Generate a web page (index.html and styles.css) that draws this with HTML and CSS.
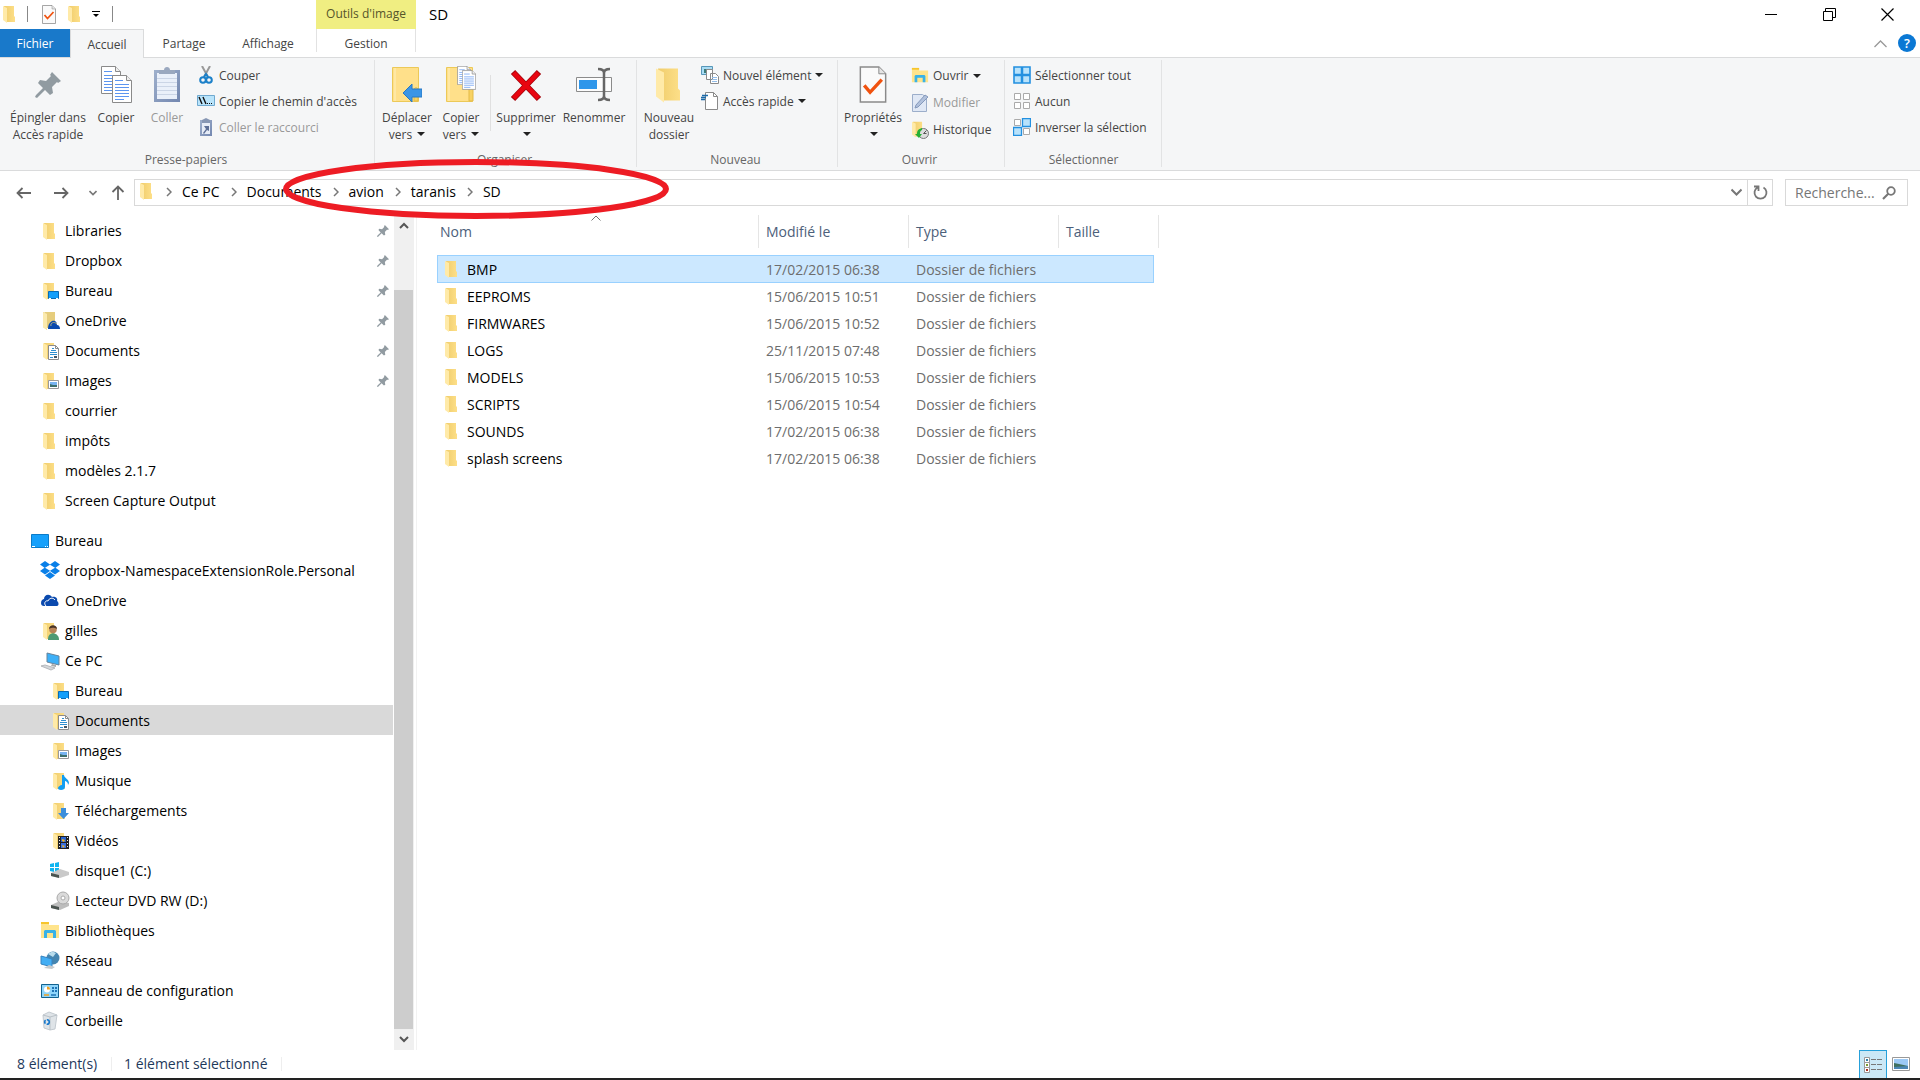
FILE: index.html
```html
<!DOCTYPE html>
<html lang="fr">
<head>
<meta charset="utf-8">
<title>SD</title>
<link rel="stylesheet" href="styles.css">
</head>
<body>
<svg class="defs" aria-hidden="true">
  <linearGradient id="gold"><stop offset="0" stop-color="#f0cd6c"/><stop offset="1" stop-color="#fddf88"/></linearGradient>
  <linearGradient id="clip" x1="0" y1="0" x2="1" y2="1"><stop offset="0" stop-color="#9fb0cc"/><stop offset="1" stop-color="#7387b0"/></linearGradient>
  <symbol id="folder" viewBox="0 0 12 17"><path d="M1 0h10v10l1 1v5H3z" fill="url(#gold)"/><path d="M0 0l4 2v15l-4-3z" fill="#ffeaa8"/></symbol>
  <symbol id="pin" viewBox="0 0 26 26"><path d="M17 0l9 9-3 2-1-1-5 5 1 6-3 2-5-5-8 8-2-1 1-2 7-7-5-5 2-3 6 1 5-5-1-1z" fill="#919ba1"/></symbol>
  <symbol id="page" viewBox="0 0 20 28"><path d="M.5 .5h14l5 5v22H.5z" fill="#fff" stroke="#8a8a8a"/><path d="M14.500 .5v5h5" fill="#eee" stroke="#8a8a8a"/><path d="M3 9.500h14M3 12.500h14M3 15.500h14M3 18.500h14M3 21.500h14M3 24.500h9M3 5.500h8" stroke="#5c95f0"/></symbol>
  <symbol id="check" viewBox="0 0 28 38"><path d="M1 1h19l7 7v29H1z" fill="#fafafa" stroke="#8a8a8a" stroke-width="1.500"/><path d="M20 1v7h7" fill="#e4e4e4" stroke="#8a8a8a"/><path d="M5 20l6 7 12-13" fill="none" stroke="#f0520f" stroke-width="3.500"/></symbol>
  <symbol id="chev" viewBox="0 0 6 10"><path d="M1 1l4 4-4 4" fill="none" stroke="#777" stroke-width="1.500"/></symbol>
  <symbol id="i-folder" viewBox="0 0 20 20"><use href="#folder" x="3" y="2" width="12" height="17"/></symbol>
  <symbol id="i-desk" viewBox="0 0 20 20"><use href="#folder" x="3" y="2" width="12" height="17"/><path d="M8.500 10.500h10v7h-10z" fill="#15a0fb" stroke="#0a6cb5"/><path d="M9 17.500h2m5 0h2" stroke="#fff"/></symbol>
  <symbol id="i-odf" viewBox="0 0 20 20"><path d="M3 1l4 1v17l-4-3zM5 1h10v16H7z" fill="#e6cd7d"/><path d="M3 1l4 2v16l-4-3z" fill="#fbeaae"/><path d="M8 18c0-4 1-6 4-8 4-1 5 2 5 4 2 0 3 2 3 4z" fill="#0b4aae"/><path d="M11 15c-1-3 3-5 6-2" fill="none" stroke="#d5c27a" stroke-width=".8"/></symbol>
  <symbol id="i-doc" viewBox="0 0 20 20"><use href="#folder" x="3" y="2" width="12" height="17"/><path d="M8.500 4.500h7l3 3v11h-10z" fill="#fff" stroke="#8b8b8b"/><path d="M15.500 4.500v3h3" fill="none" stroke="#8b8b8b"/><path d="M10 11.500h7M10 13.500h7M12 7.500h2M11 9.500h5M10 16.500h3" stroke="#2f8fd0"/><path d="M14 16h3" stroke="#456" stroke-width="2"/></symbol>
  <symbol id="i-img" viewBox="0 0 20 20"><use href="#folder" x="3" y="2" width="12" height="17"/><path d="M8.500 9.500h10v8h-10z" fill="#fff" stroke="#9a9a9a"/><path d="M10 11h7v3h-7z" fill="#78b4f2"/><path d="M10 13l3 1 4 0v2h-7z" fill="#3d6f6d"/></symbol>
  <symbol id="i-music" viewBox="0 0 20 20"><use href="#folder" x="3" y="2" width="12" height="17"/><path d="M12 4h2c0 3 5 4 5 8l-1 2c0-3-2-4-3-4v6c0 2-2 3-4 3s-3-1-3-2 2-3 4-3z" fill="#109df2"/></symbol>
  <symbol id="i-dl" viewBox="0 0 20 20"><use href="#folder" x="3" y="2" width="12" height="17"/><path d="M11 7h5v5h3l-5.500 6L8 12h3z" fill="#3c8fdc"/></symbol>
  <symbol id="i-vid" viewBox="0 0 20 20"><use href="#folder" x="3" y="2" width="12" height="17"/><path d="M8 5h11v13H8z" fill="#222"/><path d="M11 6h5v5h-5z" fill="#2b65d0"/><path d="M11 12h5v5h-5z" fill="#3a70e0"/><path d="M12 8l3 1-1 2-2-1zM12 14l3 1-2 2z" fill="#f0b428"/><path d="M9.500 6v12M17.500 6v12" stroke="#eee" stroke-dasharray="1 2"/></symbol>
  <symbol id="i-user" viewBox="0 0 20 20"><use href="#folder" x="3" y="2" width="12" height="17"/><path d="M8 19c0-4 1-6 5-7 4 1 6 3 6 7z" fill="#4e9a74"/><circle cx="13" cy="8.500" r="3.800" fill="#b98458"/><path d="M9 8c0-5 8-5 8 0-2-1-5-2-8 0z" fill="#4a3527"/></symbol>
  <symbol id="i-screen" viewBox="0 0 20 20"><path d="M1.500 3.500h17v13h-17z" fill="#15a0fb" stroke="#0b7bc8"/><path d="M2 15.500h3m10 0h1m1 0h1" stroke="#fff"/></symbol>
  <symbol id="i-dropbox" viewBox="0 0 20 20"><path d="M5 0l5 3.500 5-3.500 5 3.500-4.500 3.300L20 10l-5 3.500-5-3.500-5 3.500L0 10l4.500-3.200L0 3.500zM10 3.700L5 6.800l5 3 5-3z" fill="#0a80e8" fill-rule="evenodd"/><path d="M5 14.500l5-3.500 5 3.500-5 3.500z" fill="#0a80e8"/></symbol>
  <symbol id="i-cloud" viewBox="0 0 20 20"><path d="M1 12c0-3 2-4 3-4 0-4 5-6 8-2 4-1 6 2 5 4 2 1 2 5 0 5H4c-2 0-3-1-3-3z" fill="#0b4aae"/><path d="M6 15c-3-3 0-6 2-5 1-3 5-4 7-1" fill="none" stroke="#fff"/></symbol>
  <symbol id="i-pc" viewBox="0 0 20 20"><path d="M7 2l12 3v9L7 11z" fill="#3db0f8" stroke="#67839a"/><path d="M12 13l4 1v2l-5-1z" fill="#aaa"/><path d="M1 15l4-1 10 3-4 2z" fill="#d4d7da" stroke="#b5b8bc"/></symbol>
  <symbol id="i-disk" viewBox="0 0 20 20"><path d="M0 3l4-1v4H0zM5 2l4-1v5H5zM0 7h4v4l-4-1zM5 7h4v4H5z" fill="#10b5f0"/><path d="M1 12l9-4 9 3v3l-9 3-9-2z" fill="#c9c9c9"/><path d="M1 12l8 2v3l-8-2z" fill="#4b5450"/></symbol>
  <symbol id="i-dvd" viewBox="0 0 20 20"><path d="M1 14l9-4 9 2v3l-9 4-9-2z" fill="#bdbdbd"/><path d="M1 14l8 2v3l-8-2z" fill="#4b5450"/><circle cx="13" cy="7" r="6" fill="#dadada" stroke="#aaa"/><circle cx="13" cy="7" r="2" fill="#fff" stroke="#aaa"/></symbol>
  <symbol id="i-lib" viewBox="0 0 20 20"><path d="M1 1h8v3h10v13H1z" fill="#ffe48c"/><path d="M1 1h8v2H1z" fill="#f7c52c"/><path d="M4 17v-7l1-1h10l1 1v7h-3v-5H7v5z" fill="#39b2e8"/></symbol>
  <symbol id="i-net" viewBox="0 0 20 20"><circle cx="13" cy="7" r="6.500" fill="#4585b0"/><path d="M8 3c3-3 6-2 8-1l-3 4z" fill="#b9dcec"/><path d="M1 5l11 3v8L1 13z" fill="#43aef4" stroke="#3683c0"/><path d="M4 17l8 1 3-2-6-2z" fill="#c5cacd"/></symbol>
  <symbol id="i-panel" viewBox="0 0 20 20"><path d="M1.500 3.500h17v13h-17z" fill="#8fd5fa" stroke="#12628f"/><circle cx="7" cy="8.500" r="3" fill="#fff"/><path d="M7 8.500v-3a3 3 0 013 3z" fill="#f0a020"/><path d="M12 6h2v2h-2zM15 6h2v2h-2zM12 9h2v2h-2zM15 9h2v2h-2z" fill="#1f74b5"/><path d="M4 14h5" stroke="#f0a020" stroke-width="1.500"/><path d="M11 14h5" stroke="#1f74b5" stroke-width="1.500"/></symbol>
  <symbol id="i-bin" viewBox="0 0 20 20"><path d="M3 4l6-3 8 3-2 14-5 1-6-2z" fill="#dfe4e8" stroke="#c3cad0"/><path d="M3 4l7 2 7-2M10 6v13" fill="none" stroke="#b9c1c7"/><circle cx="7" cy="11" r="2.300" fill="none" stroke="#1678cc" stroke-width="1.600" stroke-dasharray="3.600 1.200"/></symbol>
</svg>

<header class="titlebar">
  <div class="quick">
    <svg width="12" height="17"><use href="#folder"/></svg>
    <span class="bar"></span>
    <button aria-label="Propriétés"><svg width="14" height="19"><use href="#check"/></svg></button>
    <button aria-label="Nouveau dossier"><svg width="12" height="17"><use href="#folder"/></svg></button>
    <button class="more" aria-label="Personnaliser"><svg width="8" height="8" viewBox="0 0 8 8"><path d="M0 1.500h8" stroke="#000"/><path d="M1 4h6L4 7z"/></svg></button>
    <span class="bar"></span>
  </div>
  <div class="context">Outils d'image</div>
  <h1>SD</h1>
  <div class="controls">
    <button aria-label="Réduire"><svg width="13" height="13"><path d="M0 6.500h12" stroke="#000"/></svg></button>
    <button aria-label="Restaurer"><svg width="13" height="13"><path d="M.5 3.500h9v9h-9zM2.500 3v-2.500h10v9h-3" fill="none" stroke="#000"/></svg></button>
    <button aria-label="Fermer"><svg width="13" height="13"><path d="M.5 .5l12 12m0-12l-12 12" stroke="#000" stroke-width="1.200"/></svg></button>
  </div>
</header>

<nav class="tabs">
  <button class="file">Fichier</button>
  <button class="active">Accueil</button>
  <button class="share">Partage</button>
  <button class="view">Affichage</button>
  <button class="manage">Gestion</button>
  <div class="help">
    <button aria-label="Réduire le ruban"><svg width="13" height="8"><path d="M.5 7l6-6 6 6" fill="none" stroke="#999" stroke-width="1.300"/></svg></button>
    <button class="question" aria-label="Aide">?</button>
  </div>
</nav>

<section class="ribbon">
  <div class="group g-clip">
    <div class="tools">
      <button class="big w90"><svg width="26" height="37" viewBox="0 0 26 37"><use href="#pin" y="6" width="26" height="26"/></svg><span>Épingler dans<br>Accès rapide</span></button>
      <button class="big w46"><svg width="32" height="37"><use href="#page" x="1" width="20" height="28"/><use href="#page" x="12" y="9" width="20" height="28"/></svg><span>Copier</span></button>
      <button class="big w56" disabled><svg width="28" height="37"><path d="M1 4h26v32H1z" fill="url(#clip)"/><path d="M4 7h20v26H4z" fill="#eaf0fa"/><path d="M4 12.500h20M4 16.500h20M4 20.500h20M4 24.500h20M4 28.500h20" stroke="#cbd5e6"/><path d="M6 8V4h5c0-4 6-4 6 0h5v4z" fill="#9aa8bf"/></svg><span>Coller</span></button>
      <div class="stack">
        <button class="small"><svg width="18" height="18"><path d="M5 0l6 11M13 0L7 11" stroke="#999" stroke-width="2"/><circle cx="6" cy="14" r="2.800" fill="none" stroke="#1b80c9" stroke-width="2"/><circle cx="12" cy="14" r="2.800" fill="none" stroke="#1b80c9" stroke-width="2"/><path d="M7 11l2-3 2 3" fill="none" stroke="#1b80c9" stroke-width="2"/></svg>Couper</button>
        <button class="small"><svg width="18" height="18"><path d="M.5 3.500h17v10H.5z" fill="#b9e4fb" stroke="#6fa9d0"/><path d="M2 5l3 7M6 5l3 7" stroke="#111" stroke-width="1.400"/><path d="M10 11.500h1m1 0h1m1 0h1" stroke="#111"/></svg>Copier le chemin d'accès</button>
        <button class="small" disabled><svg width="18" height="18"><path d="M3 2h12v16H3z" fill="url(#clip)"/><path d="M5 5h8v11H5z" fill="#e6ecf7"/><path d="M5 5V2l4-2 4 2v3z" fill="#8797b4"/><path d="M7 8h5v5l-2-1-3 4-1-1 3-4z" fill="#5d6f96"/></svg>Coller le raccourci</button>
      </div>
    </div>
    <h2>Presse-papiers</h2>
  </div>
  <div class="group g-org">
    <div class="tools">
      <button class="big w58"><svg width="30" height="37"><path d="M.5 1.500h26v34H.5z" fill="#ffe08a" stroke="#ecc958"/><path d="M3 2v33" stroke="#fff0bd"/><path d="M22 35V24c0-3 4-3 4 0v11z" fill="#f8d263" stroke="#e3bb48"/><path d="M11 27l9-9v5h10v8H20v5z" fill="#3b95e6" stroke="#2878c4"/></svg><span>Déplacer<br>vers <i></i></span></button>
      <button class="big w50"><svg width="30" height="37"><path d="M.5 1.500h26v34H.5z" fill="#ffe08a" stroke="#ecc958"/><path d="M3 2v33" stroke="#fff0bd"/><path d="M23 35V24c0-3 4-3 4 0v11z" fill="#f8d263" stroke="#e3bb48"/><use href="#page" x="11" y="0" width="14" height="19"/><use href="#page" x="16" y="4" width="14" height="20"/></svg><span>Copier<br>vers <i></i></span></button>
      <span class="split"></span>
      <button class="big w66"><svg width="32" height="37"><path d="M3 6l26 27M29 6L3 33" stroke="#a5060d" stroke-width="6"/><path d="M3.700 6.700l24.600 25.600M28.300 6.700L3.700 32.300" stroke="#e80510" stroke-width="4.500"/></svg><span>Supprimer<br><i></i></span></button>
      <button class="big w70"><svg width="36" height="37"><path d="M.5 11.500h35v14H.5z" fill="#fcfcfc" stroke="#8b8b8b"/><path d="M3 14h18v9H3z" fill="#2e96ea"/><path d="M22 3c4 0 6 1 6 4v23c0 3-2 4-6 4m12-31c-4 0-6 1-6 4m0 23c0 3 2 4 6 4" fill="none" stroke="#666" stroke-width="2.500"/></svg><span>Renommer</span></button>
    </div>
    <h2>Organiser</h2>
  </div>
  <div class="group g-new">
    <div class="tools">
      <button class="big w60"><svg width="26" height="37" viewBox="0 0 26 37"><use href="#folder" y="2" width="24" height="35"/></svg><span>Nouveau<br>dossier</span></button>
      <div class="stack">
        <button class="small"><svg width="18" height="18"><path d="M.5 .5h11v8H.5z" fill="#a9dcf5" stroke="#5796b8"/><path d="M3 3h3v4H3z" fill="#3c7c79"/><path d="M5.500 3.500h6v10h-6zM9.500 7.500h5l3 3v7h-8z" fill="#fff" stroke="#8a8a8a"/><path d="M11 11.500h5M11 13.500h5M11 15.500h5" stroke="#92bce8"/></svg>Nouvel élément <i></i></button>
        <button class="small"><svg width="18" height="18"><path d="M4.500 .5h8l4 4v13h-12z" fill="#fff" stroke="#8a8a8a"/><path d="M12.500 .5v4h4" fill="none" stroke="#8a8a8a"/><path d="M1 3.500h6M0 5.500h5M-1 7.500h5" stroke="#1d6aa8" stroke-width="1.300"/></svg>Accès rapide <i></i></button>
      </div>
    </div>
    <h2>Nouveau</h2>
  </div>
  <div class="group g-open">
    <div class="tools">
      <button class="big w66"><svg width="28" height="37"><use href="#check"/></svg><span>Propriétés<br><i></i></span></button>
      <div class="stack wide">
        <button class="small"><svg width="18" height="18"><use href="#i-lib"/></svg>Ouvrir <i></i></button>
        <button class="small" disabled><svg width="18" height="18"><path d="M1.500 .5h10l4 3v14h-14z" fill="#e0e8f5" stroke="#9caeca"/><path d="M4 14l1-3L14 1l3 2-10 10z" fill="#b1c1dc" stroke="#8599bb"/></svg>Modifier</button>
        <button class="small"><svg width="18" height="18"><use href="#folder" x="1" y="0" width="11" height="17"/><circle cx="12.500" cy="12.500" r="5" fill="#ddd" stroke="#777"/><path d="M12.500 12.500l3-3M12.500 12.500h3" stroke="#555"/><path d="M11 7c-4 1-5 3-5 6H4l4 4 3-4H9c0-2 0-3 2-4z" fill="#26b035"/></svg>Historique</button>
      </div>
    </div>
    <h2>Ouvrir</h2>
  </div>
  <div class="group g-select">
    <div class="tools">
      <div class="stack">
        <button class="small"><svg width="18" height="18"><path d="M1 1h16v16H1z" fill="#b8e2fb" stroke="#2390e0" stroke-width="1.600"/><path d="M9 1v16M1 9h16" stroke="#2390e0" stroke-width="2.500"/></svg>Sélectionner tout</button>
        <button class="small"><svg width="18" height="18"><path d="M1.500 1.500h6v6h-6zM10.500 1.500h6v6h-6zM1.500 10.500h6v6h-6zM10.500 10.500h6v6h-6z" fill="#fff" stroke="#aaa"/></svg>Aucun</button>
        <button class="small"><svg width="18" height="18"><path d="M1.500 1.500h6v6h-6zM10.500 10.500h6v6h-6z" fill="#fff" stroke="#aaa"/><path d="M9.500 .5h8v8h-8zM.5 9.500h8v8h-8z" fill="#b8e2fb" stroke="#2390e0" stroke-width="1.300"/></svg>Inverser la sélection</button>
      </div>
    </div>
    <h2>Sélectionner</h2>
  </div>
</section>

<div class="navrow">
  <div class="arrows">
    <button aria-label="Précédent"><svg width="15" height="12"><path d="M6.500 1L1.500 6l5 5M1.500 6H15" fill="none" stroke="#666" stroke-width="1.800"/></svg></button>
    <button aria-label="Suivant"><svg width="15" height="12"><path d="M8.500 1l5 5-5 5M13.500 6H0" fill="none" stroke="#666" stroke-width="1.800"/></svg></button>
    <button class="recent" aria-label="Emplacements récents"><svg width="8" height="6"><path d="M.5 1L4 4.500 7.500 1" fill="none" stroke="#777" stroke-width="1.600"/></svg></button>
    <button class="up" aria-label="Haut"><svg width="14" height="15"><path d="M1.500 7L7 1.500 12.500 7M7 1.500V15" fill="none" stroke="#666" stroke-width="1.800"/></svg></button>
  </div>
  <div class="address">
    <svg width="12" height="17"><use href="#folder"/></svg>
    <svg class="sep first" width="6" height="10"><use href="#chev"/></svg>
    <a href="#pc">Ce PC</a><svg class="sep" width="6" height="10"><use href="#chev"/></svg>
    <a href="#documents">Documents</a><svg class="sep" width="6" height="10"><use href="#chev"/></svg>
    <a href="#avion">avion</a><svg class="sep" width="6" height="10"><use href="#chev"/></svg>
    <a href="#taranis">taranis</a><svg class="sep" width="6" height="10"><use href="#chev"/></svg>
    <a href="#sd">SD</a>
    <button class="drop" aria-label="Historique des adresses"><svg width="11" height="8"><path d="M.5 1.500l5 5 5-5" fill="none" stroke="#777" stroke-width="2"/></svg></button>
    <button class="reload" aria-label="Actualiser"><svg width="15" height="15"><path d="M10.500 2.500a6 6 0 11-6 0M1 1.500h4.500V6" fill="none" stroke="#777" stroke-width="1.800"/></svg></button>
  </div>
  <label class="search"><input type="text" aria-label="Rechercher" placeholder="Recherche..."><svg width="14" height="14"><circle cx="9" cy="5" r="3.800" fill="none" stroke="#777" stroke-width="1.800"/><path d="M6.500 7.500L1 13" stroke="#777" stroke-width="2.200"/></svg></label>
</div>

<main>
  <nav class="tree">
    <ul class="l1">
      <li><a href="#t"><svg><use href="#i-folder"/></svg>Libraries<svg class="pin"><use href="#pin"/></svg></a></li>
      <li><a href="#t"><svg><use href="#i-folder"/></svg>Dropbox<svg class="pin"><use href="#pin"/></svg></a></li>
      <li><a href="#t"><svg><use href="#i-desk"/></svg>Bureau<svg class="pin"><use href="#pin"/></svg></a></li>
      <li><a href="#t"><svg><use href="#i-odf"/></svg>OneDrive<svg class="pin"><use href="#pin"/></svg></a></li>
      <li><a href="#t"><svg><use href="#i-doc"/></svg>Documents<svg class="pin"><use href="#pin"/></svg></a></li>
      <li><a href="#t"><svg><use href="#i-img"/></svg>Images<svg class="pin"><use href="#pin"/></svg></a></li>
      <li><a href="#t"><svg><use href="#i-folder"/></svg>courrier</a></li>
      <li><a href="#t"><svg><use href="#i-folder"/></svg>impôts</a></li>
      <li><a href="#t"><svg><use href="#i-folder"/></svg>modèles 2.1.7</a></li>
      <li><a href="#t"><svg><use href="#i-folder"/></svg>Screen Capture Output</a></li>
    </ul>
    <ul class="l0">
      <li><a href="#t"><svg><use href="#i-screen"/></svg>Bureau</a></li>
    </ul>
    <ul class="l1">
      <li><a href="#t"><svg><use href="#i-dropbox"/></svg>dropbox-NamespaceExtensionRole.Personal</a></li>
      <li><a href="#t"><svg><use href="#i-cloud"/></svg>OneDrive</a></li>
      <li><a href="#t"><svg><use href="#i-user"/></svg>gilles</a></li>
      <li><a href="#t"><svg><use href="#i-pc"/></svg>Ce PC</a></li>
    </ul>
    <ul class="l2">
      <li><a href="#t"><svg><use href="#i-desk"/></svg>Bureau</a></li>
      <li><a href="#t" class="current"><svg><use href="#i-doc"/></svg>Documents</a></li>
      <li><a href="#t"><svg><use href="#i-img"/></svg>Images</a></li>
      <li><a href="#t"><svg><use href="#i-music"/></svg>Musique</a></li>
      <li><a href="#t"><svg><use href="#i-dl"/></svg>Téléchargements</a></li>
      <li><a href="#t"><svg><use href="#i-vid"/></svg>Vidéos</a></li>
      <li><a href="#t"><svg><use href="#i-disk"/></svg>disque1 (C:)</a></li>
      <li><a href="#t"><svg><use href="#i-dvd"/></svg>Lecteur DVD RW (D:)</a></li>
    </ul>
    <ul class="l1">
      <li><a href="#t"><svg><use href="#i-lib"/></svg>Bibliothèques</a></li>
      <li><a href="#t"><svg><use href="#i-net"/></svg>Réseau</a></li>
      <li><a href="#t"><svg><use href="#i-panel"/></svg>Panneau de configuration</a></li>
      <li><a href="#t"><svg><use href="#i-bin"/></svg>Corbeille</a></li>
    </ul>
  </nav>
  <div class="scroll">
    <button aria-label="Défiler vers le haut"><svg width="10" height="7"><path d="M1 6l4-4 4 4" fill="none" stroke="#555" stroke-width="2"/></svg></button>
    <div class="thumb"></div>
    <button aria-label="Défiler vers le bas"><svg width="10" height="7"><path d="M1 1l4 4 4-4" fill="none" stroke="#555" stroke-width="2"/></svg></button>
  </div>
  <section class="files">
    <table>
      <thead>
        <tr><th class="c-name">Nom<svg class="sort" width="10" height="6"><path d="M.5 5.500L5 1l4.500 4.500" fill="none" stroke="#777"/></svg></th><th class="c-date">Modifié le</th><th class="c-type">Type</th><th class="c-size">Taille</th></tr>
      </thead>
      <tbody>
        <tr class="selected"><td><svg width="12" height="17"><use href="#folder"/></svg>BMP</td><td>17/02/2015 06:38</td><td>Dossier de fichiers</td><td></td></tr>
        <tr><td><svg width="12" height="17"><use href="#folder"/></svg>EEPROMS</td><td>15/06/2015 10:51</td><td>Dossier de fichiers</td><td></td></tr>
        <tr><td><svg width="12" height="17"><use href="#folder"/></svg>FIRMWARES</td><td>15/06/2015 10:52</td><td>Dossier de fichiers</td><td></td></tr>
        <tr><td><svg width="12" height="17"><use href="#folder"/></svg>LOGS</td><td>25/11/2015 07:48</td><td>Dossier de fichiers</td><td></td></tr>
        <tr><td><svg width="12" height="17"><use href="#folder"/></svg>MODELS</td><td>15/06/2015 10:53</td><td>Dossier de fichiers</td><td></td></tr>
        <tr><td><svg width="12" height="17"><use href="#folder"/></svg>SCRIPTS</td><td>15/06/2015 10:54</td><td>Dossier de fichiers</td><td></td></tr>
        <tr><td><svg width="12" height="17"><use href="#folder"/></svg>SOUNDS</td><td>17/02/2015 06:38</td><td>Dossier de fichiers</td><td></td></tr>
        <tr><td><svg width="12" height="17"><use href="#folder"/></svg>splash screens</td><td>17/02/2015 06:38</td><td>Dossier de fichiers</td><td></td></tr>
      </tbody>
    </table>
  </section>
</main>

<footer>
  <span class="count">8 élément(s)</span>
  <span class="chosen">1 élément sélectionné</span>
  <div class="modes">
    <button class="on" aria-label="Détails"><svg width="18" height="16"><path d="M.5 .5h5v5h-5zM.5 5.500h5v5h-5zM.5 10.500h5v5h-5z" fill="#fff" stroke="#999"/><path d="M2 3h2" stroke="#2d7fa8" stroke-width="2"/><path d="M2 8h2" stroke="#7c9a30" stroke-width="2"/><path d="M2 13h2" stroke="#b03020" stroke-width="2"/><path d="M7 2.500h5m1 0h5M7 7.500h5m1 0h5M7 12.500h5m1 0h5" stroke="#777"/></svg></button>
    <button aria-label="Grandes icônes"><svg width="18" height="14"><path d="M.5 .5h17v13H.5z" fill="#fff" stroke="#999"/><path d="M2 2h14v10H2z" fill="#9cc9f5"/><path d="M2 6l5 1 9 2v3H2z" fill="#40705f"/><path d="M2 10l14-1v3H2z" fill="#4b86b5"/></svg></button>
  </div>
</footer>
<div class="taskbar"></div>
<svg class="mark" width="388" height="62" aria-hidden="true"><ellipse cx="194" cy="31" rx="190" ry="27" fill="none" stroke="#ed1c24" stroke-width="6"/></svg>
</body>
</html>
```
FILE: styles.css
```css
*, *::before, *::after { box-sizing: border-box; }
body {
  margin: 0;
  min-height: 100vh;
  display: flex;
  flex-direction: column;
  position: relative;
  background: #fff;
  color: #000;
  font: 14px/20px "Open Sans", "Noto Sans", sans-serif;
}
button { border: 0; padding: 0; margin: 0; background: none; font: inherit; color: inherit; display: flex; align-items: center; justify-content: center; }
svg { flex: none; display: block; }
a { color: inherit; text-decoration: none; }
ul { list-style: none; margin: 0; padding: 0; }
.defs { position: absolute; width: 0; height: 0; }

/* Title bar */
.titlebar { display: flex; height: 29px; }
.quick { width: 316px; display: flex; align-items: center; padding: 0 0 1px 3px; }
.quick .bar { width: 1px; height: 16px; background: #888; margin: 0 14px 0 12px; }
.quick button { margin-right: 12px; }
.quick .more { margin-right: 0; }
.context { width: 100px; background: #f0ee82; color: #55552a; text-align: center; font-size: 12px; line-height: 28px; }
h1 { margin: 0 0 0 13px; font-size: 15px; font-weight: 400; line-height: 29px; }
.controls { margin-left: auto; display: flex; padding-right: 4px; }
.controls button { width: 58px; }

/* Tabs */
.tabs { display: flex; height: 29px; border-bottom: 1px solid #dadbdc; font-size: 12px; color: #444; }
.tabs button { padding-top: 2px; }
.tabs .file { width: 70px; background: #1979ca; color: #fff; }
.tabs .active { width: 74px; background: #f5f6f7; border: 1px solid #dadbdc; border-bottom: 0; margin-bottom: -1px; }
.share { width: 80px; }
.view { width: 88px; margin-right: 4px; }
.tabs .manage { width: 100px; border: solid #e2e2e2; border-width: 0 1px; margin-bottom: 5px; padding-top: 6px; }
.help { margin-left: auto; display: flex; gap: 11px; padding-right: 4px; }
.tabs .question { width: 18px; height: 18px; margin-top: 5px; padding: 0; border-radius: 9px; background: #0b78d4; color: #fff; font-size: 13px; font-weight: 600; }

/* Ribbon */
.ribbon { display: flex; height: 113px; background: #f5f6f7; border-bottom: 1px solid #dadbdc; font-size: 12px; line-height: 17px; color: #444; }
.group { display: flex; flex-direction: column; margin: 2px 0 3px; border-right: 1px solid #e2e3e4; }
.g-clip { width: 375px; padding-left: 3px; }
.g-org { width: 262px; padding-left: 3px; }
.g-new { width: 201px; padding-left: 2px; }
.g-open { width: 167px; padding-left: 2px; }
.g-select { width: 157px; padding-left: 6px; }
.tools { display: flex; flex: 1; }
.group h2 { margin: 0 5px 0 0; font-size: 12px; font-weight: 400; line-height: 15px; color: #666; text-align: center; }
.big { flex-direction: column; justify-content: flex-start; padding-top: 6px; gap: 6px; }
.big span { white-space: nowrap; }
.w46 { width: 46px; }
.w50 { width: 50px; }
.w56 { width: 56px; }
.w58 { width: 58px; }
.w60 { width: 60px; }
.w66 { width: 66px; }
.w70 { width: 70px; }
.w90 { width: 90px; }
button:disabled { color: #999; }
.split { width: 1px; height: 56px; margin: 15px 2px 0 4px; background: #e0e0e0; }
.stack { padding: 2px 0 0 2px; }
.stack.wide { padding-left: 5px; }
.small { height: 26px; gap: 4px; white-space: nowrap; }
.wide .small { height: 27px; }
.ribbon i { display: inline-block; border: solid transparent; border-width: 4px 4px 0; border-top-color: #222; margin-left: 2px; vertical-align: 3px; }
.small i { margin-left: 0; }

/* Navigation row */
.navrow { display: flex; align-items: flex-start; padding: 8px 12px 9px 16px; }
.arrows { display: flex; width: 118px; height: 27px; align-items: center; }
.arrows button { margin-right: 23px; }
.arrows .recent { margin: 0 14px 0 -3px; }
.arrows .up { margin: 0; }
.address { flex: 1; height: 27px; display: flex; align-items: center; border: 1px solid #d9d9d9; padding: 0 0 2px 5px; }
.sep { margin: 0 10px 0 11px; }
.sep.first { margin-left: 14px; }
.drop { margin-left: auto; width: 22px; }
.reload { width: 25px; height: 25px; margin-bottom: -2px; border-left: 1px solid #d9d9d9; }
.search { display: flex; align-items: center; width: 123px; height: 27px; margin-left: 12px; border: 1px solid #d9d9d9; padding: 0 11px 0 9px; }
.search input { flex: 1; min-width: 0; width: 0; border: 0; padding: 0; outline: 0; font: inherit; background: none; }
.search input::placeholder { color: #767676; opacity: 1; }

/* Folder tree */
main { display: flex; flex: 1; }
.tree { width: 393px; }
.tree a { display: flex; align-items: center; gap: 5px; height: 30px; padding: 1px 4px 0 0; }
.tree svg { width: 20px; height: 20px; }
.tree .pin { width: 12px; height: 12px; margin-left: auto; }
.l0 { margin-top: 10px; }
.tree .l0 a { padding-left: 30px; }
.tree .l1 a { padding-left: 40px; }
.tree .l2 a { padding-left: 50px; }
.tree .current { background: #d9d9d9; }
.scroll { width: 20px; margin-left: 1px; display: flex; flex-direction: column; background: #f0f0f0; }
.scroll button { width: 20px; height: 21px; }
.scroll .thumb { flex: 1; margin: 54px 1px 0 0; background: #cdcdcd; }

/* File list */
.files { flex: 1; margin-left: 2px; border-left: 1px solid #f2f2f2; padding-left: 20px; }
table { border-collapse: separate; border-spacing: 0; table-layout: fixed; width: 722px; }
th { height: 33px; padding: 0 0 0 7px; text-align: left; font-weight: 400; color: #4c607a; border-right: 1px solid #e5e5e5; position: relative; }
.c-name { width: 322px; padding-left: 3px; }
.c-date { width: 150px; }
.c-type { width: 150px; }
.c-size { width: 100px; }
.sort { position: absolute; left: 50%; top: 0; margin-left: -7px; }
tbody::before { content: ""; display: block; height: 7px; }
td { height: 27px; padding: 0 0 0 7px; color: #6d6d6d; white-space: nowrap; }
td:first-child { padding-left: 8px; color: #000; }
td svg { display: inline-block; vertical-align: -3px; margin-right: 10px; }
.selected td { height: 28px; padding-top: 1px; background: #cce8ff; border: solid #99d1ff; border-width: 1px 0; }
.selected td:first-child { border-left-width: 1px; padding-left: 7px; }
.selected td:last-child { background: none; border: 0; padding: 0 5px 0 0; }
.selected td:last-child::after { content: ""; display: block; height: 28px; background: #cce8ff; border: solid #99d1ff; border-width: 1px 1px 1px 0; }

/* Status bar */
footer { display: flex; height: 28px; align-items: center; color: #1e395b; padding-left: 17px; }
footer span { border-right: 1px solid #eee; line-height: 14px; }
.count { width: 95px; }
.chosen { width: 170px; padding-left: 12px; }
.modes { margin-left: auto; display: flex; align-self: stretch; padding-right: 5px; }
.modes button { width: 28px; }
.modes .on { background: #cbe8f6; border: 1px solid #26a0da; border-bottom: 0; }
.taskbar { height: 2px; background: #222; }

/* Hand-drawn mark over the path */
.mark { position: absolute; left: 282px; top: 158px; pointer-events: none; }
```
